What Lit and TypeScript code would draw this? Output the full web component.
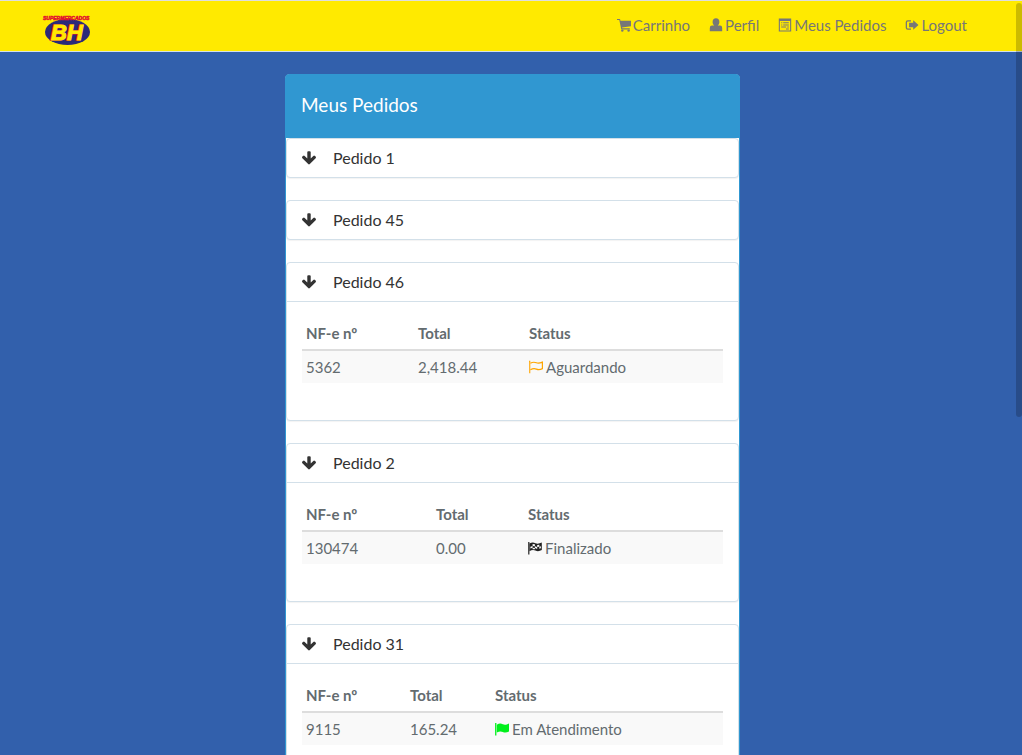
import { LitElement, html, css, svg, nothing } from "lit";
import { customElement, property, state } from "lit/decorators.js";

type Status = "waiting" | "done" | "serving";

interface Order {
  id: number;
  open: boolean;
  columns?: [number, number];
  invoice?: string;
  total?: string;
  status?: Status;
}

const LABELS: Record<Status, string> = {
  waiting: "Aguardando",
  done: "Finalizado",
  serving: "Em Atendimento",
};

const glyphs = {
  cart: svg`<path d="M0 1h2.600q.5 0 .6.5l.3 1.200H14v5.600l-9 1.100.2.9h7.600v1.100H4.300L2.300 2.100H0z"/><circle cx="5.300" cy="12.600" r="1.200"/><circle cx="11.600" cy="12.600" r="1.200"/>`,
  user: svg`<path d="M7 .3c2.100 0 3.400 1.400 3.400 3.600 0 1.500-.6 2.700-1.500 3.400v.3H11q2.200 0 2.200 2.400v3.200H.8V10q0-2.400 2.200-2.400h2.100v-.3C4.200 6.600 3.600 5.400 3.600 3.900 3.600 1.700 4.900.3 7 .3z"/>`,
  list: svg`<path fill-rule="evenodd" d="M.8.4h12.400v13.200H.8zM1.900 2.900v9.600h10.200V2.900z"/><path d="M3.200 4.200h1.100v1H3.200zM5.200 4.200h5.600v1H5.200zM3.200 6.400h1.100v1H3.200zM5.200 6.400h5.600v1H5.200zM3.200 8.600h5v1h-5zM9.200 8.600h1.600v1H9.200zM8 10.600h2.800v1H8z"/>`,
  logout: svg`<path d="M6 2.200v1.300H2.900q-.9 0-.9.900v5.200q0 .9.900.9H6v1.300H2.800Q.7 11.800.7 9.700V4.300q0-2.100 2.100-2.100z"/><path d="M8.200 2.200 13.500 7l-5.300 4.800V9.200H4.100V4.800h4.100z"/>`,
  waiting: svg`<path d="M0 .8h1.300v12.400H.2V2.400z"/><path fill="none" stroke="currentColor" stroke-width="1.200" d="M1.400 3.200c2.200-1.200 4-1.300 6-.4 2 .9 3.600.4 6-.7v6.500c-2.200 1.200-4 1.400-6 .5-2-.9-3.800-.6-6 .6"/>`,
  done: svg`<path d="M.2 1h1.200v12.400H.2z"/><path fill-rule="evenodd" d="M1.400 2.600c2.200-1.200 4-1.300 6-.4 2 .9 4 .4 6.400-.7v7.600c-2.200 1.200-4.400 1.400-6.400.5-2-.9-3.800-.6-6 .6zM2.400 5.700v1.900l2.200-.8V5zM4.600 3v2l2.300.2v-2zM6.900 5.200v1.900l2.300.8V6zM9.200 4v2l2.100-.3V3.700zM11.300 5.700v2l1.600-.5V5.200zM4.600 6.800v1.400l2.300.1V7.100z"/>`,
  serving: svg`<path d="M.1 1h1.300v12.400H.1z"/><path d="M1.800 2.700c2.200-1.300 4-1.400 6-.5 2 .9 3.700.5 6.200-.8v8c-2.200 1.200-4.200 1.400-6.200.5-2-.9-3.800-.6-6 .7z"/>`,
};

const icon = (name: keyof typeof glyphs) =>
  html`<svg class="icon" viewBox="0 0 14 14" aria-hidden="true">${glyphs[name]}</svg>`;

@customElement("order-card")
export class OrderCard extends LitElement {
  @property({ attribute: false }) order!: Order;
  @state() private toggled = false;

  static styles = css`
    :host {
      display: block;
      border: 1px solid #d3e0e9;
      border-radius: 4px;
      background: #fff;
      box-shadow: 0 1px 1px rgba(0, 0, 0, 0.05);
    }
    .title {
      margin: 0;
      font-size: 16px;
      font-weight: 400;
    }
    .toggle {
      display: flex;
      align-items: center;
      gap: 16px;
      width: 100%;
      height: 38px;
      padding: 0 14px;
      border: 0;
      background: none;
      color: #333;
      font: inherit;
      cursor: pointer;
    }
    .arrow {
      width: 16px;
      height: 16px;
      fill: currentColor;
    }
    .body {
      padding: 15px 15px 37px;
      border-top: 1px solid #d3e0e9;
    }
    table {
      width: 100%;
      border-collapse: collapse;
      table-layout: fixed;
      font-size: 15px;
      line-height: 22px;
    }
    th,
    td {
      padding: 5px 4px;
      text-align: left;
    }
    th {
      border-bottom: 2px solid #ddd;
      font-weight: 700;
    }
    td {
      background: #f9f9f9;
    }
    .status {
      display: flex;
      align-items: center;
      gap: 3px;
    }
    .icon {
      width: 14px;
      height: 14px;
      fill: currentColor;
    }
    .waiting .icon {
      color: #ffa500;
    }
    .done .icon {
      color: #222;
    }
    .serving .icon {
      color: #00f01c;
    }
  `;

  render() {
    const o = this.order;
    const open = o.open !== this.toggled;
    return html`
      <h4 class="title">
        <button class="toggle" aria-expanded=${open} @click=${() => (this.toggled = !this.toggled)}>
          <svg class="arrow" viewBox="0 0 1792 1792" aria-hidden="true">
            <path
              d="M1675 832q0 53-37 90l-651 652q-39 37-91 37-53 0-90-37l-651-652q-38-36-38-90 0-53 38-91l74-75q39-37 91-37 53 0 90 37l294 294v-704q0-52 38-90t90-38h128q52 0 90 38t38 90v704l294-294q37-37 90-37 52 0 91 37l75 75q37 39 37 91z"
            />
          </svg>
          Pedido ${o.id}
        </button>
      </h4>
      ${open && o.status
        ? html`<div class="body">
            <table>
              <colgroup>
                ${o.columns!.map((w) => html`<col style="width:${w}px" />`)}
                <col />
              </colgroup>
              <thead>
                <tr><th>NF-e nº</th><th>Total</th><th>Status</th></tr>
              </thead>
              <tbody>
                <tr>
                  <td>${o.invoice}</td>
                  <td>${o.total}</td>
                  <td><span class="status ${o.status}">${icon(o.status)}${LABELS[o.status]}</span></td>
                </tr>
              </tbody>
            </table>
          </div>`
        : nothing}
    `;
  }
}

@customElement("app-root")
export class AppRoot extends LitElement {
  private orders: Order[] = [
    { id: 1, open: false },
    { id: 45, open: false },
    { id: 46, open: true, columns: [112, 111], invoice: "5362", total: "2,418.44", status: "waiting" },
    { id: 2, open: true, columns: [130, 92], invoice: "130474", total: "0.00", status: "done" },
    { id: 31, open: true, columns: [104, 85], invoice: "9115", total: "165.24", status: "serving" },
  ];

  static styles = css`
    :host {
      display: flex;
      flex-direction: column;
      height: 100vh;
      overflow: hidden;
      background: #3260ac;
      color: #636b6f;
      font-family: Lato, "Open Sans", sans-serif;
      font-size: 15px;
      line-height: 22px;
    }
    .navbar {
      flex: none;
      border-top: 1px solid #dedede;
      border-bottom: 1px solid #d3e0e9;
      background: #ffea00;
    }
    .inner {
      display: flex;
      align-items: center;
      justify-content: space-between;
      max-width: 924px;
      height: 50px;
      margin: 0 auto;
      padding-right: 12px;
    }
    .brand {
      display: block;
      padding-top: 9px;
    }
    .logo {
      display: block;
      width: 50px;
      height: 31px;
      overflow: visible;
    }
    .links {
      display: flex;
      gap: 19px;
      margin: 0;
      padding: 0 0 2px;
      list-style: none;
    }
    .link {
      display: flex;
      align-items: center;
      gap: 2px;
      color: #777;
      text-decoration: none;
    }
    .icon {
      width: 14px;
      height: 14px;
      fill: currentColor;
    }
    .main {
      flex: 1;
      min-height: 0;
      padding: 22px 0 22px 3px;
      overflow-y: auto;
      scrollbar-width: none;
    }
    .panel {
      box-sizing: border-box;
      max-width: 455px;
      margin: 0 auto;
      border: 1px solid #3097d1;
      border-radius: 4px;
      background: #fff;
    }
    .heading {
      margin: 0;
      padding: 19px 15px 22px;
      background: #3097d1;
      color: #fff;
      font-size: 19px;
      font-weight: 400;
    }
    .orders {
      display: grid;
      gap: 22px;
      padding-bottom: 22px;
    }
    .thumb {
      position: fixed;
      top: 3px;
      right: 0;
      width: 6px;
      height: 414px;
      border-radius: 3px;
      background: rgba(0, 0, 0, 0.2);
    }
  `;

  render() {
    const links: [keyof typeof glyphs, string][] = [
      ["cart", "Carrinho"],
      ["user", "Perfil"],
      ["list", "Meus Pedidos"],
      ["logout", "Logout"],
    ];
    return html`
      <nav class="navbar">
        <div class="inner">
          <a class="brand" href="#" aria-label="Supermercados BH">
            <svg class="logo" viewBox="0 0 50 31" aria-hidden="true">
              <ellipse cx="24.500" cy="17" rx="22.500" ry="13" fill="#2b2a78" />
              <text x="0" y="4.500" font-family="Liberation Sans" font-size="5" font-weight="700" font-style="italic" fill="#e3122d" stroke="#e3122d" stroke-width=".5">SUPERMERCADOS</text>
              <text x="7" y="24.500" font-family="Liberation Sans" font-size="22" font-weight="700" font-style="italic" fill="#e3122d" stroke="#e3122d" stroke-width="1.500">BH</text>
              <text x="8" y="24.500" font-family="Liberation Sans" font-size="22" font-weight="700" font-style="italic" fill="#ffea00" stroke="#ffea00" stroke-width=".9">BH</text>
            </svg>
          </a>
          <ul class="links">
            ${links.map(([name, label]) => html`<li><a class="link" href="#">${icon(name)}${label}</a></li>`)}
          </ul>
        </div>
      </nav>
      <main class="main">
        <section class="panel">
          <h1 class="heading">Meus Pedidos</h1>
          <div class="orders">
            ${this.orders.map((order) => html`<order-card .order=${order}></order-card>`)}
          </div>
        </section>
      </main>
      <div class="thumb"></div>
    `;
  }
}
